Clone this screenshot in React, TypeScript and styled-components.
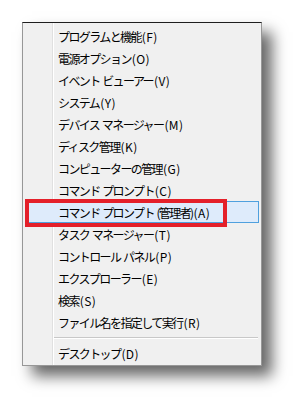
import React from 'react';
import styled, { createGlobalStyle } from 'styled-components';

const Global = createGlobalStyle`
  html, body {
    margin: 0;
    padding: 0;
    background: #ffffff;
  }
  body {
    width: 304px;
    height: 409px;
    overflow: hidden;
  }
`;

const Page = styled.div`
  padding: 22px 0 0 22px;
  font-family: "Noto Sans CJK JP", "Noto Sans", sans-serif;
`;

const Menu = styled.div`
  position: relative;
  width: 240px;
  height: 344px;
  display: flex;
  flex-direction: column;
  padding-top: 2px;
  box-sizing: border-box;
  background: #f0f0f0;
  border: 1px solid #979797;
  border-top-color: #1e1e1e;
  box-shadow: 10px 10px 14px rgba(0, 0, 0, 0.6);
`;

const Gutter = styled.div`
  position: absolute;
  top: 0;
  bottom: 0;
  left: 29px;
  width: 1px;
  background: #e0e0e0;
  border-right: 1px solid #ffffff;
`;

const Item = styled.div<{ $active?: boolean }>`
  position: relative;
  height: 22px;
  margin: 0 2px;
  padding-left: 32px;
  display: flex;
  align-items: center;
  box-sizing: border-box;
  font-size: 12px;
  letter-spacing: -1.6px;
  word-spacing: 1.5px;
  color: #000;
  white-space: pre;
  background: ${(p) => (p.$active ? '#deebfb' : 'transparent')};
  border: 1px solid ${(p) => (p.$active ? '#4fa0de' : 'transparent')};
`;

const Key = styled.span`
  letter-spacing: 0.4px;
  margin-left: 1px;
`;

const Separator = styled.div`
  height: 9px;
  margin-left: 30px;
  margin-right: 3px;
  display: flex;
  align-items: center;

  &::after {
    content: '';
    flex: 1;
    height: 1px;
    background: #c8c8c8;
    box-shadow: 0 1px 0 #ffffff;
  }
`;

const Callout = styled.div`
  position: absolute;
  left: 2px;
  top: 176px;
  width: 202px;
  height: 28px;
  box-sizing: border-box;
  border: 4px solid #e4202a;
  pointer-events: none;
`;

const items: [string, string][] = [
  ['プログラムと機能', 'F'],
  ['電源オプション', 'O'],
  ['イベント ビューアー', 'V'],
  ['システム', 'Y'],
  ['デバイス マネージャー', 'M'],
  ['ディスク管理', 'K'],
  ['コンピューターの管理', 'G'],
  ['コマンド プロンプト', 'C'],
  ['コマンド プロンプト (管理者)', 'A'],
  ['タスク マネージャー', 'T'],
  ['コントロール パネル', 'P'],
  ['エクスプローラー', 'E'],
  ['検索', 'S'],
  ['ファイル名を指定して実行', 'R'],
];

function App() {
  return (
    <>
      <Global />
      <Page>
        <Menu>
          <Gutter />
          {items.map(([t, k], i) => (
            <Item key={t} $active={i === 8}>
              {t}
              <Key>({k})</Key>
            </Item>
          ))}
          <Separator />
          <Item>
            デスクトップ<Key>(D)</Key>
          </Item>
          <Callout />
        </Menu>
      </Page>
    </>
  );
}

export default App;
